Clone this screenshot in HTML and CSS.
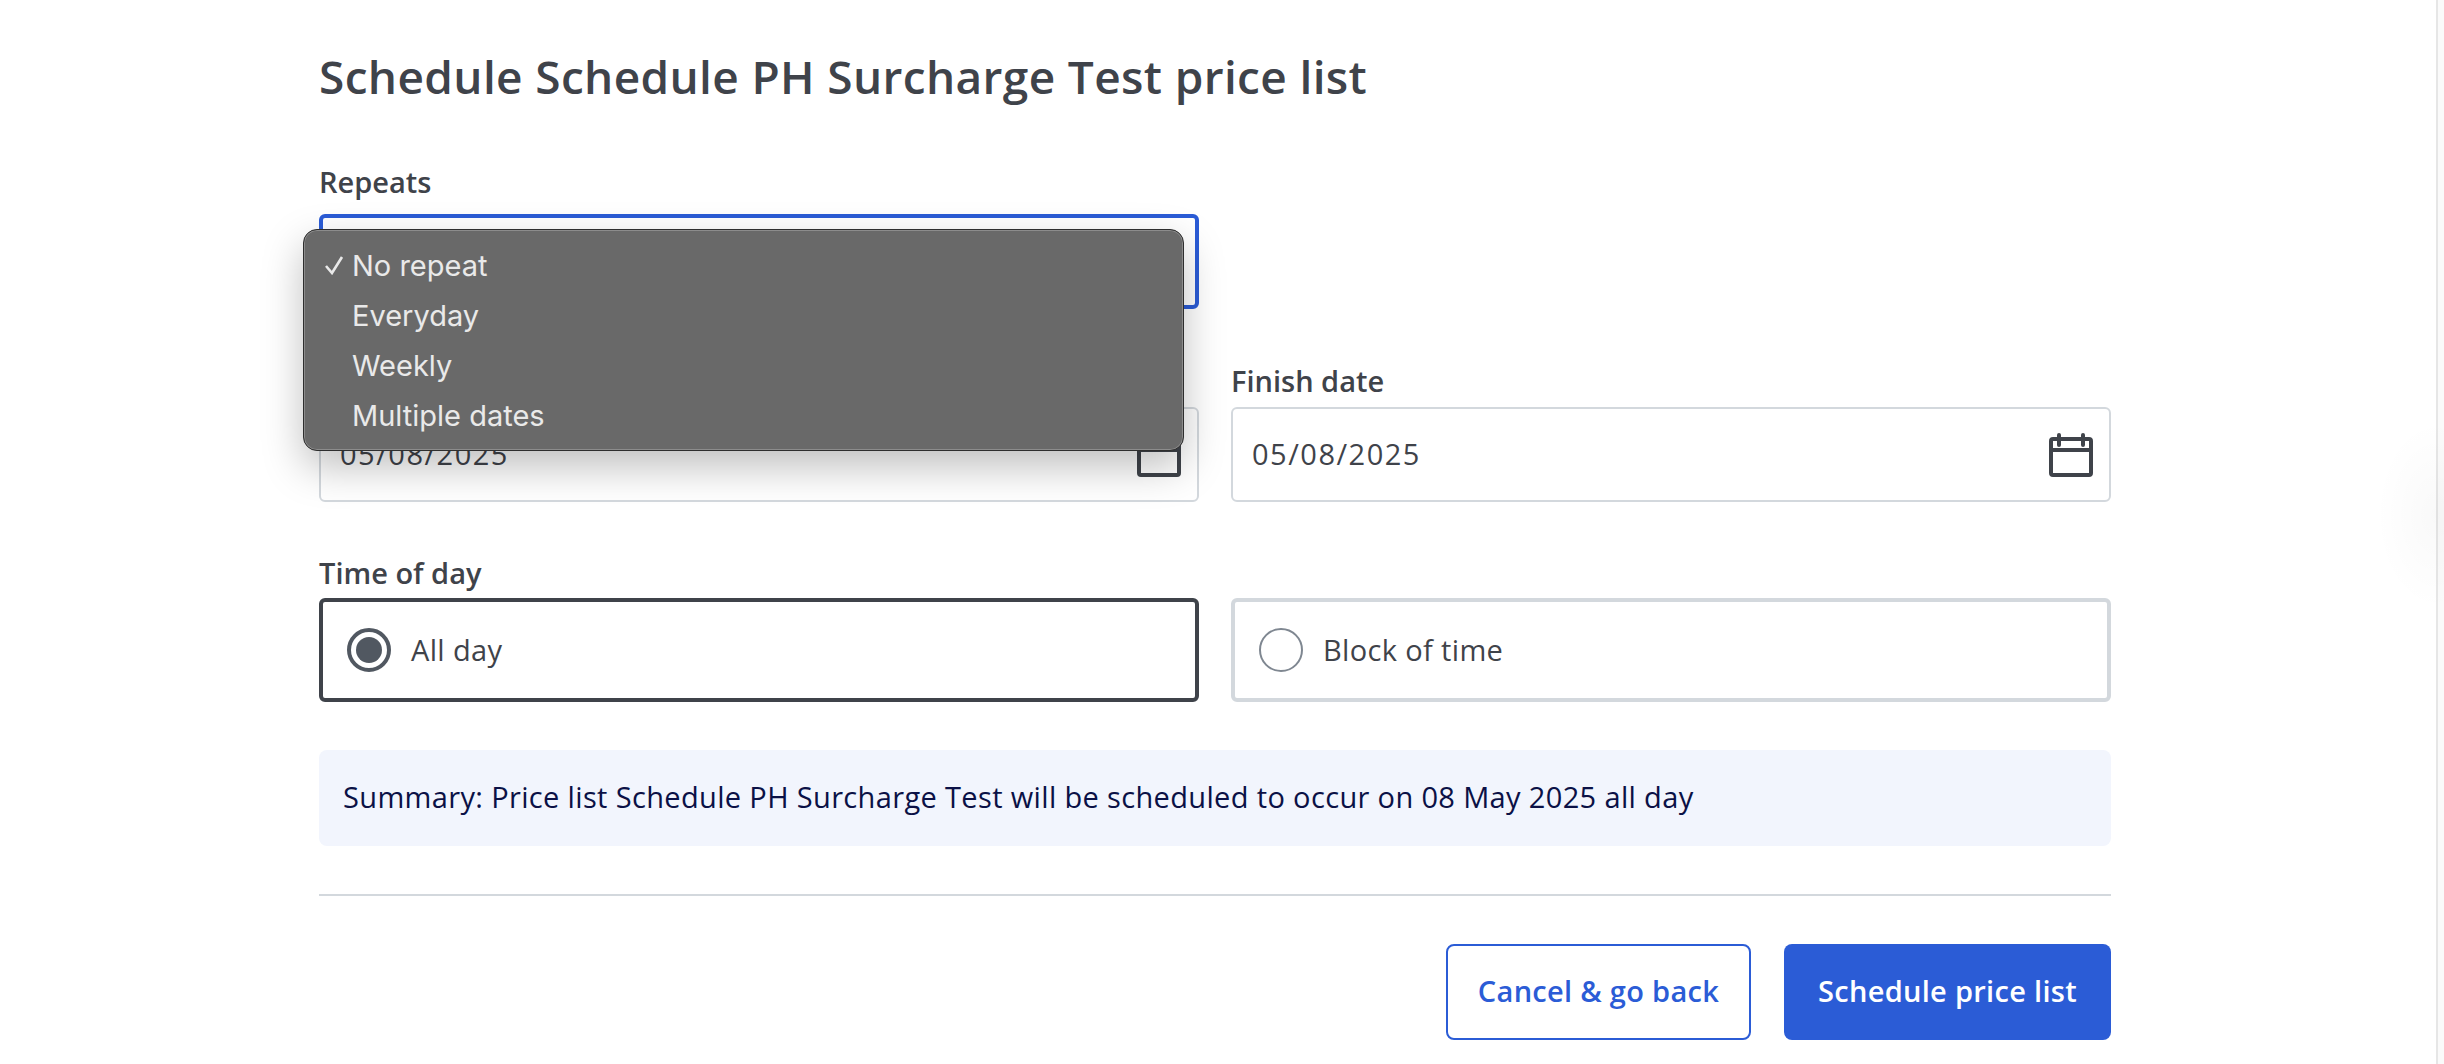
FILE: index.html
```html
<!DOCTYPE html>
<html lang="en">
<head>
    <meta charset="UTF-8">
    <meta name="viewport" content="width=device-width, initial-scale=1.0">
    <title>Schedule price list</title>
    <link rel="stylesheet" href="styles.css">
</head>
<body>
    <div class="page">
        <div class="content">
            <h1 class="title">Schedule Schedule PH Surcharge Test price list</h1>

            <div class="field repeats">
                <div class="label">Repeats</div>
                <div class="select">No repeat</div>
                <div class="select-menu">
                    <div class="menu-item">
                        <svg class="tick" viewBox="0 0 20 20"><path d="M2 11l6 7L18 2" fill="none" stroke="#e9e9e9" stroke-width="2.6"/></svg>
                        No repeat
                    </div>
                    <div class="menu-item">Everyday</div>
                    <div class="menu-item">Weekly</div>
                    <div class="menu-item">Multiple dates</div>
                </div>
            </div>

            <div class="two-cols dates">
                <div class="field">
                    <div class="label">Start date</div>
                    <div class="date-input">
                        <span>05/08/2025</span>
                        <svg class="calendar" viewBox="0 0 44 44"><path d="M4 6h36a2 2 0 0 1 2 2v32a2 2 0 0 1-2 2H4a2 2 0 0 1-2-2V8a2 2 0 0 1 2-2zM2 17h40M10 2v10M34 2v10" fill="none" stroke="#3f434a" stroke-width="4" stroke-linecap="round"/></svg>
                    </div>
                </div>
                <div class="field">
                    <div class="label">Finish date</div>
                    <div class="date-input">
                        <span>05/08/2025</span>
                        <svg class="calendar" viewBox="0 0 44 44"><path d="M4 6h36a2 2 0 0 1 2 2v32a2 2 0 0 1-2 2H4a2 2 0 0 1-2-2V8a2 2 0 0 1 2-2zM2 17h40M10 2v10M34 2v10" fill="none" stroke="#3f434a" stroke-width="4" stroke-linecap="round"/></svg>
                    </div>
                </div>
            </div>

            <div class="label time-label">Time of day</div>
            <div class="two-cols">
                <div class="radio-card selected">
                    <span class="radio checked"></span>
                    <span class="radio-text">All day</span>
                </div>
                <div class="radio-card">
                    <span class="radio"></span>
                    <span class="radio-text">Block of time</span>
                </div>
            </div>

            <div class="summary">Summary: Price list Schedule PH Surcharge Test will be scheduled to occur on 08 May 2025 all day</div>

            <div class="footer">
                <button class="btn btn-outline">Cancel &amp; go back</button>
                <button class="btn btn-primary">Schedule price list</button>
            </div>
        </div>
        <div class="scrollbar"></div>
    </div>
</body>
</html>
```
FILE: styles.css
```css
* {
    box-sizing: border-box;
}

html, body {
    height: 100%;
}

body {
    margin: 0;
    background-color: #fff;
    color: #3f434a;
    font-family: "Open Sans", sans-serif;
    font-size: 29px;
    letter-spacing: 0.35px;
    overflow: hidden;
}

.page {
    display: flex;
    height: 100%;
}

.content {
    width: 1792px;
    margin-left: 319px;
    padding-top: 46px;
}

.title {
    margin: 0 0 57px;
    font-size: 46px;
    line-height: 60px;
    font-weight: 600;
    letter-spacing: 0.36px;
}

.label {
    font-size: 29px;
    line-height: 38px;
    font-weight: 600;
    letter-spacing: 0;
    margin-bottom: 7px;
}

.field {
    position: relative;
}

.repeats {
    width: 880px;
}

.repeats .label {
    margin-bottom: 13px;
}

.select {
    height: 95px;
    border: 4px solid #2b5cd6;
    border-radius: 6px;
    padding: 0 16px;
    display: flex;
    align-items: center;
}

/* native popup of the select, sits over the fields below */
.select-menu {
    position: absolute;
    left: -16px;
    top: 66px;
    width: 881px;
    height: 222px;
    padding: 10px 0;
    background-color: #696969;
    border: 1px solid #2e2e2e;
    border-radius: 14px;
    box-shadow: inset 0 0 0 1px #8c8c8c, 0 16px 40px rgba(0, 0, 0, 0.25);
    color: #e9e9e9;
    font-family: Inter, sans-serif;
    font-size: 29px;
    letter-spacing: 0;
    z-index: 2;
}

.menu-item {
    height: 50px;
    padding-left: 48px;
    display: flex;
    align-items: center;
    position: relative;
}

.tick {
    position: absolute;
    left: 20px;
    top: 15px;
    width: 20px;
    height: 20px;
}

.two-cols {
    display: grid;
    grid-template-columns: 880px 880px;
    gap: 32px;
}

.dates {
    margin-top: 53px;
}

.date-input {
    height: 95px;
    border: 2px solid #d3d8dd;
    border-radius: 6px;
    padding: 0 16px 0 19px;
    display: flex;
    align-items: center;
    justify-content: space-between;
    letter-spacing: 1.5px;
}

.date-input span {
    margin-bottom: 3px;
}

.calendar {
    width: 44px;
    height: 44px;
}

.time-label {
    margin-top: 52px;
    margin-bottom: 6px;
}

.radio-card {
    height: 104px;
    border: 4px solid #d3d8dd;
    border-radius: 6px;
    padding: 0 24px;
    display: flex;
    align-items: center;
    gap: 20px;
}

.radio-card.selected {
    border-color: #3f434a;
}

.radio-text {
    margin-bottom: 2px;
}

.radio {
    width: 44px;
    height: 44px;
    border: 2px solid #7f8791;
    border-radius: 50%;
    background-color: #fff;
}

.radio.checked {
    border: 4px solid #515861;
    padding: 5px;
    background-color: #515861;
    background-clip: content-box;
}

.summary {
    margin-top: 48px;
    height: 96px;
    padding: 0 24px 3px;
    display: flex;
    align-items: center;
    background-color: #f2f5fd;
    border-radius: 8px;
    color: #0b1146;
}

.footer {
    margin-top: 48px;
    padding-top: 48px;
    border-top: 2px solid #d3d8dd;
    display: flex;
    justify-content: flex-end;
    gap: 33px;
}

.btn {
    height: 96px;
    border-radius: 8px;
    font-family: inherit;
    font-size: 29px;
    font-weight: 600;
    letter-spacing: 0.3px;
    padding: 0 0 3px;
}

.btn-outline {
    width: 305px;
    background-color: #fff;
    border: 2px solid #2b5cd6;
    color: #2b5cd6;
}

.btn-primary {
    width: 327px;
    background-color: #2b5cd6;
    border: none;
    color: #fff;
}

.scrollbar {
    position: absolute;
    top: 0;
    right: 0;
    bottom: 0;
    width: 8px;
    background-color: #fafafa;
    border-left: 2px solid #e6e6e6;
}

/* faint shadow of the overlay handle beside the scrollbar */
.scrollbar::before {
    content: '';
    position: absolute;
    top: 420px;
    left: -62px;
    width: 120px;
    height: 190px;
    background: radial-gradient(closest-side, rgba(0, 0, 0, 0.025), rgba(0, 0, 0, 0));
}
```
